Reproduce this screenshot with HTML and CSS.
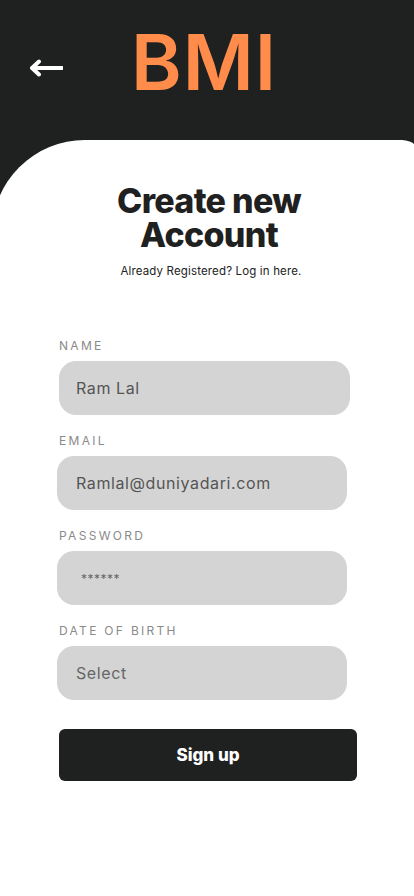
FILE: index.html
```html
<!DOCTYPE html>
<html lang="en">
<head>
<meta charset="utf-8">
<title>BMI - Create new Account</title>
<link rel="stylesheet" href="styles.css">
</head>
<body>
<div class="screen">
  <header class="topbar">
    <button class="back" aria-label="Back">
      <svg width="34" height="18" viewBox="0 0 34 18" fill="none" stroke="#ffffff" stroke-width="4" stroke-linecap="round" stroke-linejoin="round">
        <path d="M33 9H5"/>
        <path d="M10 2.5L3 9L10 15.5"/>
      </svg>
    </button>
    <h1 class="brand">BMI</h1>
  </header>
  <main class="card">
    <h2 class="title">Create new<br>Account</h2>
    <p class="subtitle">Already Registered? Log in here.</p>
    <form class="form">
      <div class="field">
        <label class="label">NAME</label>
        <div class="input input-name">Ram Lal</div>
      </div>
      <div class="field">
        <label class="label">EMAIL</label>
        <div class="input">Ramlal@duniyadari.com</div>
      </div>
      <div class="field">
        <label class="label">PASSWORD</label>
        <div class="input input-pass">******</div>
      </div>
      <div class="field">
        <label class="label">DATE OF BIRTH</label>
        <div class="input input-select">Select</div>
      </div>
      <button type="button" class="submit">Sign up</button>
    </form>
  </main>
</div>
</body>
</html>
```
FILE: styles.css
```css
* { box-sizing: border-box; }
html, body { margin: 0; padding: 0; }
body {
  background: #ffffff;
  font-family: Inter, "Liberation Sans", sans-serif;
  overflow-x: hidden;
}
.screen {
  background: #1f2120;
  width: 414px;
  min-height: 896px;
  display: flex;
  flex-direction: column;
}
.topbar {
  height: 140px;
  padding: 24px 0 0 29px;
  display: flex;
  align-items: flex-start;
}
.back {
  background: none;
  border: 0;
  padding: 0;
  margin-top: 35px;
  width: 34px;
  height: 18px;
  display: block;
}
.back svg { display: block; }
.brand {
  margin: 0 0 0 68px;
  font-family: Inter, "Liberation Sans", sans-serif;
  font-weight: 600;
  font-size: 77px;
  line-height: 77px;
  color: #ff8c4b;
  letter-spacing: 1px;
}
.card {
  flex: 1;
  background: #ffffff;
  margin: 0 -8px;
  border-radius: 93px 20px 0 0;
  padding: 44px 8px 40px;
  display: flex;
  flex-direction: column;
  align-items: center;
}
.title {
  margin: 0;
  font-family: Inter, "Liberation Sans", sans-serif;
  font-weight: 800;
  font-size: 34px;
  line-height: 34px;
  letter-spacing: -0.7px;
  text-align: center;
  color: #1f2120;
  transform: translateX(2px);
}
.subtitle {
  margin: 12px 0 0;
  font-size: 11.5px;
  line-height: 14px;
  letter-spacing: 0.15px;
  color: #222222;
  transform: translateX(4px);
}
.form {
  width: 414px;
  margin-top: 60px;
  padding-left: 57px;
  display: flex;
  flex-direction: column;
  gap: 18px;
}
.field {
  display: flex;
  flex-direction: column;
  gap: 7px;
}
.label {
  margin-left: 2px;
  font-size: 12px;
  line-height: 16px;
  letter-spacing: 2.3px;
  color: #8a8a8a;
}
.input {
  width: 290px;
  height: 54px;
  border-radius: 17px;
  background: #d4d4d4;
  padding-left: 19px;
  display: flex;
  align-items: center;
  font-size: 16px;
  letter-spacing: 0.6px;
  color: #555555;
}
.input-name {
  margin-left: 2px;
  width: 291px;
  padding-left: 17px;
}
.input-pass {
  padding-left: 24px;
  font-size: 12px;
  letter-spacing: 0.5px;
  color: #666666;
}
.input-select { color: #666666; }
.submit {
  margin: 11px 0 0 2px;
  width: 298px;
  height: 52px;
  border: 0;
  border-radius: 6px;
  background: #1f2120;
  color: #ffffff;
  font-family: Inter, "Liberation Sans", sans-serif;
  font-weight: 800;
  font-size: 17px;
}
```
